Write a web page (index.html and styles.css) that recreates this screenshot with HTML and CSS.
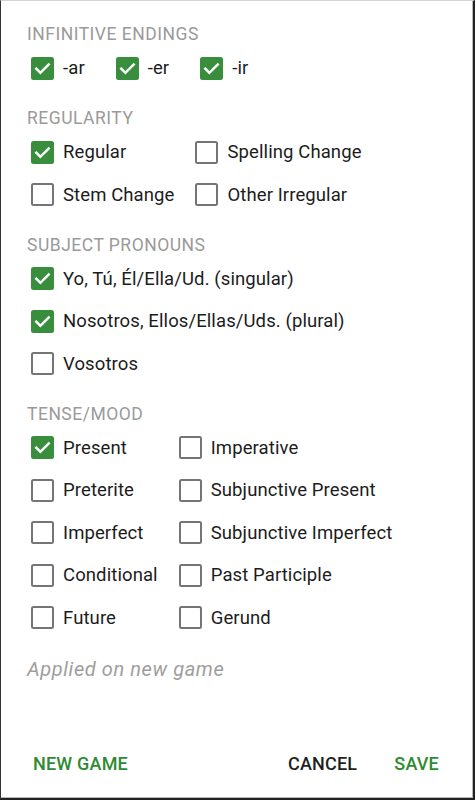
FILE: index.html
```html
<!DOCTYPE html>
<html>
<head>
<meta charset="utf-8">
<link rel="stylesheet" href="styles.css">
</head>
<body>
<div class="dialog">
  <div class="content">
    <section class="section first">
      <h2 class="section-title">INFINITIVE ENDINGS</h2>
      <div class="inline-row">
        <label class="item"><span class="box checked"><svg viewBox="0 0 24 24"><path d="M5.5 12.2l4.3 4.3 8.7-8.7"/></svg></span><span class="label">-ar</span></label>
        <label class="item"><span class="box checked"><svg viewBox="0 0 24 24"><path d="M5.5 12.2l4.3 4.3 8.7-8.7"/></svg></span><span class="label">-er</span></label>
        <label class="item"><span class="box checked"><svg viewBox="0 0 24 24"><path d="M5.5 12.2l4.3 4.3 8.7-8.7"/></svg></span><span class="label">-ir</span></label>
      </div>
    </section>

    <section class="section">
      <h2 class="section-title">REGULARITY</h2>
      <div class="grid">
        <label class="item"><span class="box checked"><svg viewBox="0 0 24 24"><path d="M5.5 12.2l4.3 4.3 8.7-8.7"/></svg></span><span class="label">Regular</span></label>
        <label class="item"><span class="box"></span><span class="label">Spelling Change</span></label>
        <label class="item"><span class="box"></span><span class="label">Stem Change</span></label>
        <label class="item"><span class="box"></span><span class="label">Other Irregular</span></label>
      </div>
    </section>

    <section class="section">
      <h2 class="section-title">SUBJECT PRONOUNS</h2>
      <div class="list">
        <label class="item"><span class="box checked"><svg viewBox="0 0 24 24"><path d="M5.5 12.2l4.3 4.3 8.7-8.7"/></svg></span><span class="label">Yo, Tú, Él/Ella/Ud. (singular)</span></label>
        <label class="item"><span class="box checked"><svg viewBox="0 0 24 24"><path d="M5.5 12.2l4.3 4.3 8.7-8.7"/></svg></span><span class="label">Nosotros, Ellos/Ellas/Uds. (plural)</span></label>
        <label class="item"><span class="box"></span><span class="label">Vosotros</span></label>
      </div>
    </section>

    <section class="section">
      <h2 class="section-title">TENSE/MOOD</h2>
      <div class="grid">
        <label class="item"><span class="box checked"><svg viewBox="0 0 24 24"><path d="M5.5 12.2l4.3 4.3 8.7-8.7"/></svg></span><span class="label">Present</span></label>
        <label class="item"><span class="box"></span><span class="label">Imperative</span></label>
        <label class="item"><span class="box"></span><span class="label">Preterite</span></label>
        <label class="item"><span class="box"></span><span class="label">Subjunctive Present</span></label>
        <label class="item"><span class="box"></span><span class="label">Imperfect</span></label>
        <label class="item"><span class="box"></span><span class="label">Subjunctive Imperfect</span></label>
        <label class="item"><span class="box"></span><span class="label">Conditional</span></label>
        <label class="item"><span class="box"></span><span class="label">Past Participle</span></label>
        <label class="item"><span class="box"></span><span class="label">Future</span></label>
        <label class="item"><span class="box"></span><span class="label">Gerund</span></label>
      </div>
    </section>

    <p class="note">Applied on new game</p>
  </div>

  <div class="actions">
    <button class="btn accent">NEW GAME</button>
    <div class="spacer"></div>
    <button class="btn plain">CANCEL</button>
    <button class="btn accent">SAVE</button>
  </div>
</div>
</body>
</html>
```

FILE: styles.css
```css
* { box-sizing: border-box; }

html, body {
  margin: 0;
  padding: 0;
  background: #ffffff;
}

body {
  font-family: Roboto, "Noto Sans", "Liberation Sans", sans-serif;
  color: #212121;
}

.dialog {
  width: 475px;
  height: 800px;
  display: flex;
  flex-direction: column;
  border-top: 1px solid #d4d4d4;
  border-left: 1px solid #333333;
  border-right: 2px solid #222222;
  border-bottom: 2px solid #222222;
  box-shadow: inset -1px -1px 0 #b8b8b8;
  background: #ffffff;
}

.content {
  padding: 23px 26px 0 26px;
}

.section {
  margin-top: 18.5px;
}

.section.first {
  margin-top: 0;
}

.section-title {
  margin: 0 0 3px 0;
  font-size: 17.5px;
  line-height: 20px;
  font-weight: 400;
  color: #9a9a9a;
  letter-spacing: 0.5px;
}

.inline-row {
  display: flex;
  gap: 27px;
}

.grid {
  display: grid;
  grid-template-columns: auto auto;
  justify-content: start;
  column-gap: 17px;
}

.list {
  display: flex;
  flex-direction: column;
}

.item {
  display: flex;
  align-items: center;
  height: 42.5px;
}

.box {
  width: 23px;
  height: 23px;
  margin-left: 4px;
  border: 2.6px solid #757575;
  border-radius: 2.5px;
  flex: none;
  display: flex;
  align-items: center;
  justify-content: center;
}

.box.checked {
  background: #388e3c;
  border-color: #388e3c;
}

.box svg {
  width: 23px;
  height: 23px;
  flex: none;
}

.box svg path {
  fill: none;
  stroke: #ffffff;
  stroke-width: 2.6;
  stroke-linecap: square;
  stroke-linejoin: miter;
}

.label {
  margin-left: 9px;
  font-size: 18.5px;
  line-height: 22px;
  letter-spacing: 0.1px;
  color: #1c1c1c;
  white-space: nowrap;
}

.note {
  margin: 18px 0 0 0;
  font-size: 20px;
  line-height: 24px;
  letter-spacing: 0.6px;
  font-style: italic;
  color: #9e9e9e;
}

.actions {
  margin-top: auto;
  display: flex;
  align-items: center;
  height: 48px;
  margin-bottom: 11px;
  padding: 0 24px 0 22px;
}

.spacer {
  flex: 1;
}

.btn {
  font-family: Roboto, "Noto Sans", "Liberation Sans", sans-serif;
  font-size: 18px;
  font-weight: 500;
  background: none;
  border: none;
  padding: 0 10px;
  height: 40px;
  letter-spacing: 0.2px;
  cursor: pointer;
}

.btn.accent {
  color: #2e8b32;
}

.btn.plain {
  color: #1f1f1f;
  margin-right: 17px;
}
```
